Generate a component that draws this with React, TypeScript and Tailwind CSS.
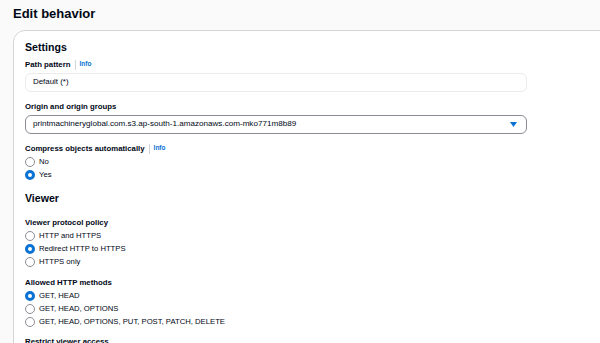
import React, { useState } from 'react';

const font = { fontFamily: '"Liberation Sans", Arial, sans-serif' };

interface RadioGroupProps {
  options: string[];
  value: string;
  onChange: (v: string) => void;
}

const RadioGroup: React.FC<RadioGroupProps> = ({ options, value, onChange }) => (
  <div className="flex flex-col gap-[3px] mt-[3px]">
    {options.map(opt => (
      <label key={opt} className="flex items-center gap-[4px] h-[10px] cursor-pointer" onClick={() => onChange(opt)}>
        {value === opt ? (
          <span className="w-[10px] h-[10px] rounded-full border-[3px] border-[#0972d3] bg-white shrink-0" />
        ) : (
          <span className="w-[10px] h-[10px] rounded-full border border-[#8c8c94] bg-white shrink-0" />
        )}
        <span className="text-[7.7px] text-[#000716] leading-none">{opt}</span>
      </label>
    ))}
  </div>
);

const FieldLabel: React.FC<{ text: string; info?: boolean }> = ({ text, info }) => (
  <div className="flex items-center h-[10px]">
    <span className="text-[7.8px] font-bold text-[#000716] leading-none">{text}</span>
    {info && (
      <>
        <span className="w-px h-[10px] bg-[#d1d5db] mx-[4px]" />
        <span className="text-[6.5px] font-bold text-[#0972d3] leading-none">Info</span>
      </>
    )}
  </div>
);

export default function App() {
  const [compress, setCompress] = useState('Yes');
  const [protocol, setProtocol] = useState('Redirect HTTP to HTTPS');
  const [methods, setMethods] = useState('GET, HEAD');

  return (
    <div className="w-[600px] h-[343px] overflow-hidden bg-[#fafafa]" style={font}>
      {/* Header */}
      <div className="h-[30px] pl-[13px] pt-[7px]">
        <h1 className="text-[13px] font-bold text-[#000716] leading-none">Edit behavior</h1>
      </div>

      {/* Card */}
      <div className="ml-[13px] w-[640px] bg-white border border-[#d5d5d5] rounded-tl-[12px] px-[11px] pt-[11px] pb-[20px]">
        <h2 className="text-[10.6px] font-bold text-[#000716] leading-none mb-[7px]">Settings</h2>

        <FieldLabel text="Path pattern" info />
        <div className="mt-[3px] w-[502px] h-[19px] border border-[#ebebeb] rounded-[6px] flex items-center px-[7px]">
          <span className="text-[7.9px] text-[#000716] leading-none">Default (*)</span>
        </div>

        <div className="mt-[10px]">
          <FieldLabel text="Origin and origin groups" />
        </div>
        <div className="mt-[3px] w-[502px] h-[19px] border border-[#8c8c94] rounded-[6px] flex items-center justify-between pl-[7px] pr-[9px]">
          <span className="text-[8.1px] text-[#000716] leading-none">printmachineryglobal.com.s3.ap-south-1.amazonaws.com-mko771m8b89</span>
          <svg width="7" height="5" viewBox="0 0 7 5">
            <path d="M0 0 H7 L3.5 5 Z" fill="#0972d3" />
          </svg>
        </div>

        <div className="mt-[10px]">
          <FieldLabel text="Compress objects automatically" info />
        </div>
        <RadioGroup options={['No', 'Yes']} value={compress} onChange={setCompress} />

        <h2 className="mt-[13px] text-[10.6px] font-bold text-[#000716] leading-none">Viewer</h2>

        <div className="mt-[15px]">
          <FieldLabel text="Viewer protocol policy" />
        </div>
        <RadioGroup
          options={['HTTP and HTTPS', 'Redirect HTTP to HTTPS', 'HTTPS only']}
          value={protocol}
          onChange={setProtocol}
        />

        <div className="mt-[11px]">
          <FieldLabel text="Allowed HTTP methods" />
        </div>
        <RadioGroup
          options={['GET, HEAD', 'GET, HEAD, OPTIONS', 'GET, HEAD, OPTIONS, PUT, POST, PATCH, DELETE']}
          value={methods}
          onChange={setMethods}
        />

        <div className="mt-[10px]">
          <FieldLabel text="Restrict viewer access" />
        </div>
      </div>
    </div>
  );
}
